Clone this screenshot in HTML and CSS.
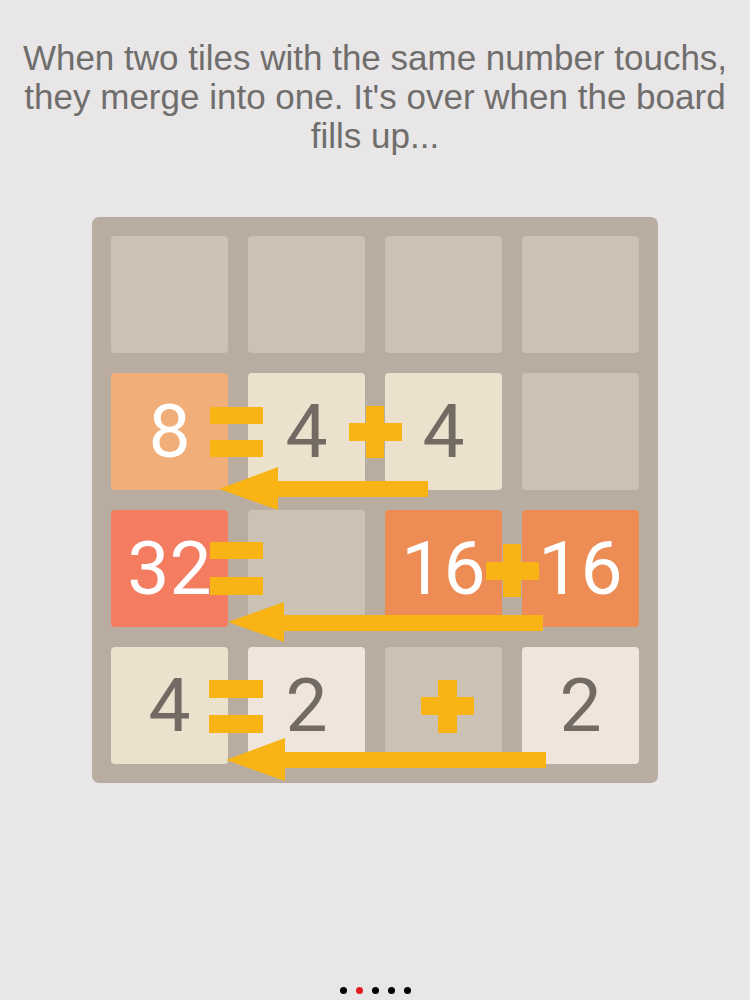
FILE: index.html
```html
<!DOCTYPE html>
<html lang="en">

<head>
    <meta charset="UTF-8">
    <title>How to play</title>
    <link rel="stylesheet" href="styles.css">
</head>

<body>

    <div class="screen">
        <p class="intro">When two tiles with the same number touchs,<br>they merge into one. It's over when the board<br>fills up...</p>

        <!--4x4 board, the merge hints are drawn on top of it-->
        <div class="board">
            <div class="grid">
                <div class="cell"></div>
                <div class="cell"></div>
                <div class="cell"></div>
                <div class="cell"></div>

                <div class="cell tile_8">8</div>
                <div class="cell tile_4">4</div>
                <div class="cell tile_4">4</div>
                <div class="cell"></div>

                <div class="cell tile_32">32</div>
                <div class="cell"></div>
                <div class="cell tile_16">16</div>
                <div class="cell tile_16">16</div>

                <div class="cell tile_4">4</div>
                <div class="cell tile_2">2</div>
                <div class="cell"></div>
                <div class="cell tile_2">2</div>
            </div>

            <svg class="hints" width="566" height="566" viewBox="0 0 566 566">
                <g fill="#f8b414">
                    <!--row 2: 8 = 4 + 4-->
                    <rect x="118" y="190" width="53" height="17"/>
                    <rect x="118" y="223" width="53" height="17"/>
                    <rect x="257" y="206" width="53" height="18"/>
                    <rect x="274" y="189" width="18" height="52"/>
                    <polygon points="127,272 186,250 186,264 336,264 336,280 186,280 186,293"/>

                    <!--row 3: 32 = 16 + 16-->
                    <rect x="118" y="325" width="53" height="17"/>
                    <rect x="118" y="360" width="53" height="18"/>
                    <rect x="394" y="345" width="53" height="18"/>
                    <rect x="411" y="327" width="18" height="53"/>
                    <polygon points="136,405 192,385 192,398 451,398 451,414 192,414 192,425"/>

                    <!--row 4: 4 = 2 + 2-->
                    <rect x="117" y="463" width="54" height="18"/>
                    <rect x="117" y="498" width="54" height="18"/>
                    <rect x="329" y="480" width="53" height="18"/>
                    <rect x="346" y="463" width="19" height="53"/>
                    <polygon points="134,543 193,521 193,535 454,535 454,551 193,551 193,564"/>
                </g>
            </svg>
        </div>

        <div class="pager">
            <span class="dot"></span>
            <span class="dot active"></span>
            <span class="dot"></span>
            <span class="dot"></span>
            <span class="dot"></span>
        </div>
    </div>

</body>

</html>
```

FILE: styles.css
```css
* {
    margin: 0px;
    padding: 0px;
    box-sizing: border-box;
}

body {
    background-color: #e8e6e7;
    font-family: "Liberation Sans", Arial, sans-serif;
}

.screen {
    height: 1000px;
    display: flex;
    flex-direction: column;
    align-items: center;
}

.intro {
    margin-top: 38px;
    font-size: 35px;
    line-height: 39px;
    color: #706e6d;
    text-align: center;
}

.board {
    position: relative;
    margin-top: 62px;
    width: 566px;
    height: 566px;
    background-color: #b9ada1;
    border-radius: 7px;
}

.grid {
    display: grid;
    grid-template-columns: repeat(4, 117px);
    grid-template-rows: repeat(4, 117px);
    gap: 20px;
    padding: 19px;
}

.cell {
    background-color: #cbc1b5;
    border-radius: 4px;
    display: flex;
    align-items: center;
    justify-content: center;
    font-family: Roboto, "Liberation Sans", sans-serif;
    font-size: 75px;
    line-height: 1;
    color: #ffffff;
}

.tile_2 {
    background-color: #efe5dc;
    color: #736b63;
}

.tile_4 {
    background-color: #ece1cd;
    color: #736b63;
}

.tile_8 {
    background-color: #f1ae79;
}

.tile_16 {
    background-color: #ed8d55;
}

.tile_32 {
    background-color: #f37c61;
}

/*merge hints lie over the tiles*/
.hints {
    position: absolute;
    left: 0;
    top: 0;
}

.pager {
    margin-top: auto;
    margin-bottom: 6px;
    display: flex;
    gap: 9px;
}

.dot {
    width: 7px;
    height: 7px;
    border-radius: 50%;
    background-color: #000000;
}

.dot.active {
    background-color: #e01c1c;
}
```
